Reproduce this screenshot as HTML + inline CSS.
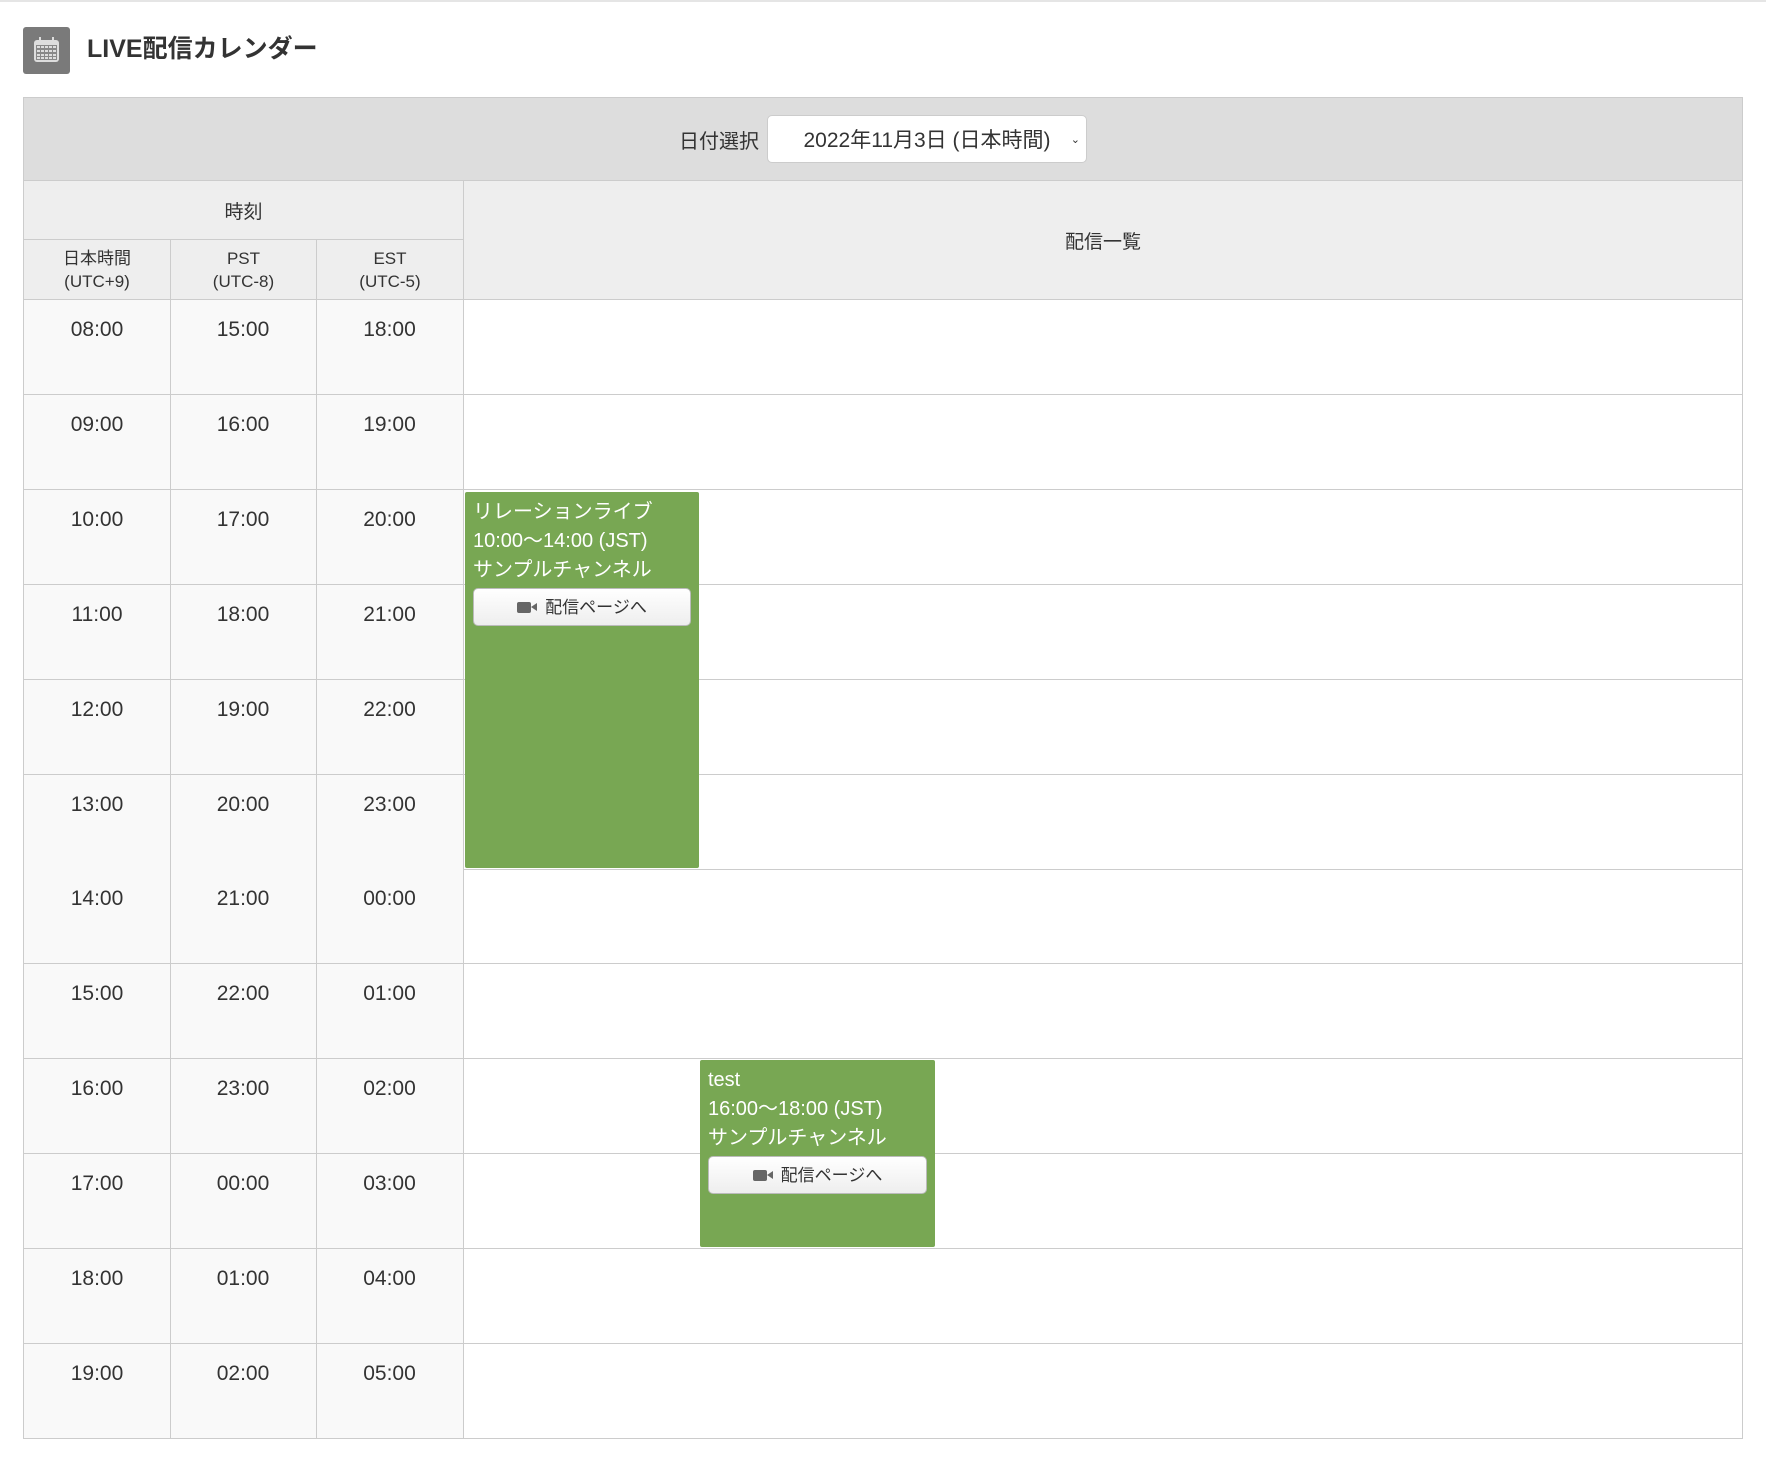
<!DOCTYPE html>
<html><head><meta charset="utf-8"><style>
*{box-sizing:border-box;margin:0;padding:0}
body{width:1766px;height:1460px;background:#fff;font-family:"Liberation Sans","Noto Sans CJK JP",sans-serif;color:#333;position:relative;overflow:hidden;border-top:2px solid #e5e5e5}
.a{position:absolute}
.c{display:flex;align-items:center;justify-content:center;text-align:center}
.ev{position:absolute;background:#78a753;border-radius:2px;color:#fff;font-size:20px;line-height:29px;padding:6px 8px}
.btn{margin-top:3px;height:38px;background:linear-gradient(#fff,#eee);border:1px solid #bbb;border-radius:5px;color:#333;font-size:17px;display:flex;align-items:center;justify-content:center;gap:8px}
.cam{display:inline-block;width:14px;height:11px;background:#666;border-radius:2px;position:relative;margin-right:6px}
.cam:after{content:"";position:absolute;left:14px;top:1px;border-right:6px solid #666;border-top:4.5px solid transparent;border-bottom:4.5px solid transparent}
</style></head><body>
<div class="a" style="left:23px;top:25px;width:47px;height:47px;background:#7a7a7a;border-radius:3px">
<svg width="47" height="47" viewBox="0 0 47 47"><rect x="11" y="13" width="25" height="22" rx="3" fill="#ddd"/><rect x="13" y="18" width="21" height="15" fill="#888"/><g fill="#ddd"><rect x="14" y="19" width="3" height="2"/><rect x="18" y="19" width="3" height="2"/><rect x="22" y="19" width="3" height="2"/><rect x="26" y="19" width="3" height="2"/><rect x="30" y="19" width="3" height="2"/><rect x="14" y="23" width="3" height="2"/><rect x="18" y="23" width="3" height="2"/><rect x="22" y="23" width="3" height="2"/><rect x="26" y="23" width="3" height="2"/><rect x="30" y="23" width="3" height="2"/><rect x="14" y="27" width="3" height="2"/><rect x="18" y="27" width="3" height="2"/><rect x="22" y="27" width="3" height="2"/><rect x="26" y="27" width="3" height="2"/><rect x="30" y="27" width="3" height="2"/><rect x="14" y="30" width="3" height="2"/><rect x="18" y="30" width="3" height="2"/><rect x="22" y="30" width="3" height="2"/><rect x="26" y="30" width="3" height="2"/><rect x="30" y="30" width="3" height="2"/><rect x="16" y="10" width="2" height="6"/><rect x="29" y="10" width="2" height="6"/></g></svg></div>
<div class="a" style="left:87px;top:31px;font-size:25px;font-weight:bold;line-height:32px">LIVE配信カレンダー</div>

<div class="a" style="left:23px;top:95px;width:1720px;height:1342px;border:1px solid #ccc"></div>
<div class="a c" style="left:24px;top:96px;width:1718px;height:83px;background:#ddd;border-bottom:1px solid #ccc">
<span style="font-size:20px;margin-right:8px">日付選択</span>
<div style="width:320px;height:48px;background:#fff;border:1px solid #ccc;border-radius:5px;font-size:21px;display:flex;align-items:center;justify-content:center;position:relative">2022年11月3日 (日本時間)<span style="position:absolute;right:6px;font-size:11px">⌄</span></div></div>

<div class="a c" style="left:24px;top:179px;width:439px;height:59px;background:#eee;border-bottom:1px solid #ccc;font-size:19px">時刻</div>
<div class="a c" style="left:463px;top:179px;width:1279px;height:118px;background:#eee;border-left:1px solid #ccc;font-size:19px">配信一覧</div>
<div class="a c" style="left:24px;top:238px;width:146px;height:59px;background:#eee;font-size:17px;line-height:23px">日本時間<br>(UTC+9)</div>
<div class="a c" style="left:170px;top:238px;width:146px;height:59px;background:#eee;border-left:1px solid #ccc;font-size:17px;line-height:23px">PST<br>(UTC-8)</div>
<div class="a c" style="left:316px;top:238px;width:147px;height:59px;background:#eee;border-left:1px solid #ccc;font-size:17px;line-height:23px">EST<br>(UTC-5)</div>
<div class="a" style="left:24px;top:297px;width:1718px;height:1px;background:#ccc"></div>

<div id="rows"></div>
<script>
var j=["08","09","10","11","12","13","14","15","16","17","18","19"],p=["15","16","17","18","19","20","21","22","23","00","01","02"],e=["18","19","20","21","22","23","00","01","02","03","04","05"],h="";
for(var i=0;i<12;i++){var t=298+i*94.9;
h+='<div class="a" style="left:24px;top:'+t+'px;width:439px;height:94px;background:#f9f9f9"></div>';
[[24,j],[170,p],[316,e]].forEach(function(c,k){h+='<div class="a" style="left:'+c[0]+'px;top:'+(t+18)+'px;width:'+(k==2?147:146)+'px;text-align:center;font-size:21px">'+c[1][i]+':00</div>';});
if(i<11)h+='<div class="a" style="left:24px;top:'+(t+94)+'px;width:1718px;height:1px;background:#ccc"></div>';}
h+='<div class="a" style="left:170px;top:298px;width:1px;height:1138px;background:#ccc"></div><div class="a" style="left:316px;top:298px;width:1px;height:1138px;background:#ccc"></div><div class="a" style="left:463px;top:298px;width:1px;height:1138px;background:#ccc"></div>';
document.getElementById("rows").outerHTML=h;
</script>

<div class="ev" style="left:465px;top:490px;width:234px;height:376px">リレーションライブ<br>10:00〜14:00 (JST)<br>サンプルチャンネル
<div class="btn"><span class="cam"></span>配信ページへ</div></div>
<div class="ev" style="left:700px;top:1058px;width:235px;height:187px">test<br>16:00〜18:00 (JST)<br>サンプルチャンネル
<div class="btn"><span class="cam"></span>配信ページへ</div></div>
</body></html>
